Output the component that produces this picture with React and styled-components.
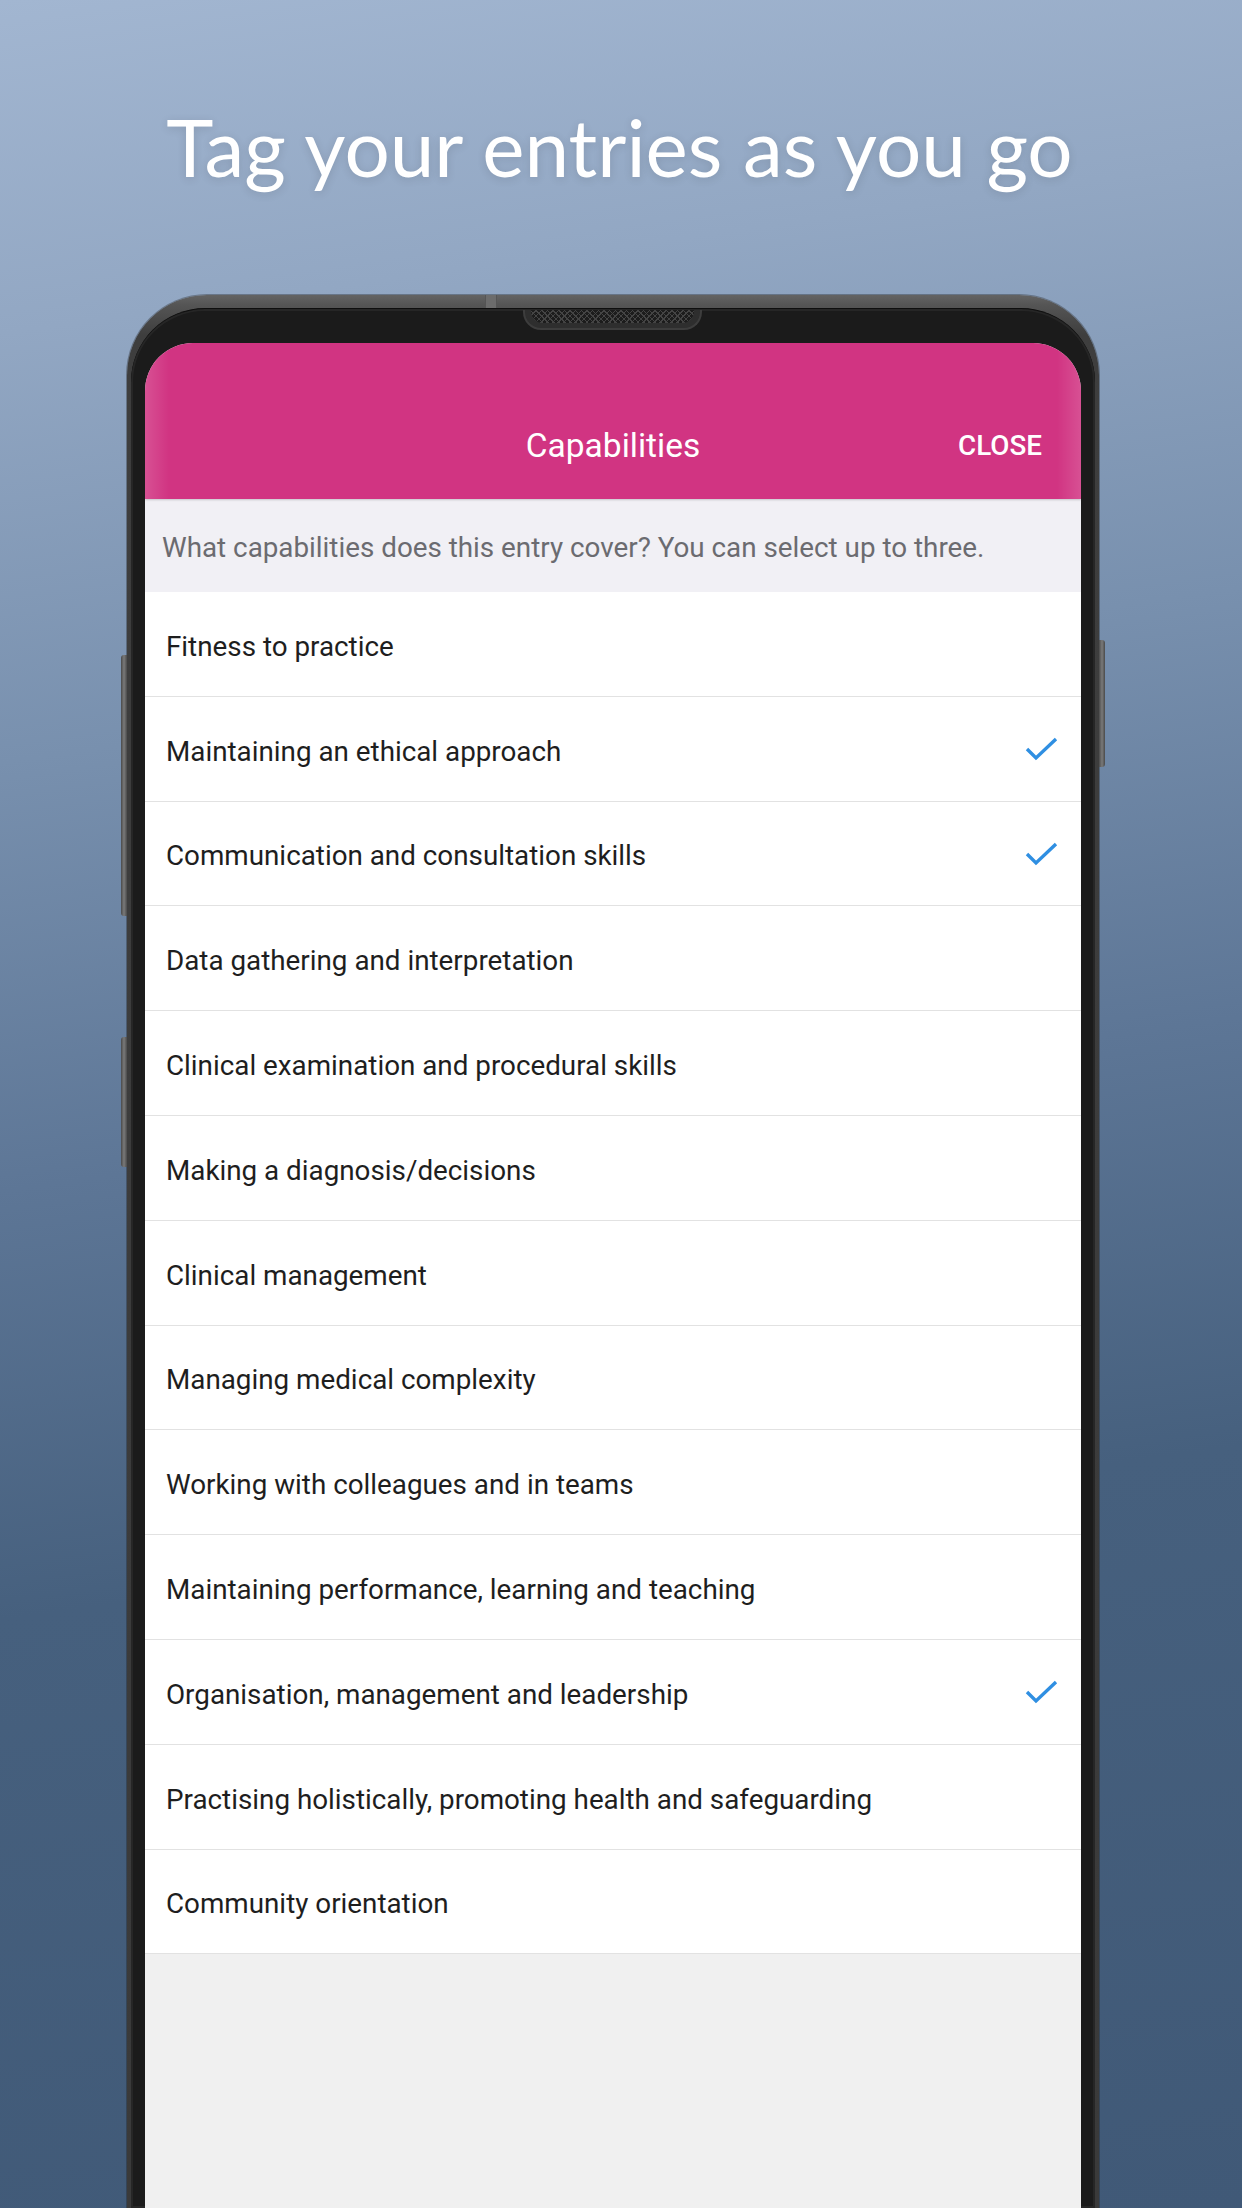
import React from "react";
import styled, { createGlobalStyle } from "styled-components";

const GlobalStyle = createGlobalStyle`
  html, body { margin: 0; padding: 0; }
  body { width: 1242px; height: 2208px; overflow: hidden; }
  * { box-sizing: border-box; }
`;

const Page = styled.div`
  width: 1242px;
  height: 2208px;
  display: flex;
  flex-direction: column;
  overflow: hidden;
  background: linear-gradient(172deg, #a2b6d1 0%, #92a7c3 14%, #7890ae 32%, #5d7696 50%, #46607e 68%, #405977 100%);
`;

const Title = styled.h1`
  margin: 98px 0 0 0;
  height: 96px;
  line-height: 96px;
  text-align: center;
  font-family: Lato, "Open Sans", sans-serif;
  font-weight: 400;
  font-size: 80px;
  color: #ffffff;
  text-shadow: 0 2px 10px rgba(0, 0, 0, 0.12);
  padding-right: 3px;
`;

const Phone = styled.div`
  position: relative;
  flex: 1;
  margin: 101px 0 0 127px;
  width: 972px;
  display: flex;
  flex-direction: column;
  padding: 13px 4px 0 4px;
  border-radius: 80px 80px 0 0;
  background: linear-gradient(180deg, #636363 0px, #555 10px, #3e3e3e 40px, #3a3a3a 100%);
  box-shadow: 0 0 0 1px rgba(30, 30, 30, 0.35);
`;

const Seam = styled.div`
  position: absolute;
  left: 358px;
  top: 0;
  width: 12px;
  height: 13px;
  background: #6c6c6c;
  border-left: 1px solid #555;
  border-right: 1px solid #555;
`;

const SideButton = styled.div`
  position: absolute;
  width: 6px;
  top: ${(p) => p.$top}px;
  height: ${(p) => p.$h}px;
  ${(p) => (p.$side === "left" ? "left: -6px;" : "right: -6px;")}
  border-radius: ${(p) => (p.$side === "left" ? "3px 0 0 3px" : "0 3px 3px 0")};
  background: linear-gradient(90deg, #4a4a4a, #7a7a7a 50%, #4a4a4a);
`;

const Bezel = styled.div`
  position: relative;
  flex: 1;
  display: flex;
  flex-direction: column;
  padding: 34px 14px 0 14px;
  border-radius: 74px 74px 0 0;
  background: #1b1b1b;
  border-top: 1px solid #0e0e0e;
  box-shadow: inset 0 0 0 2px #262626;
`;

const Notch = styled.div`
  position: absolute;
  left: 392px;
  top: 1px;
  width: 179px;
  height: 20px;
  border-radius: 0 0 18px 18px;
  background: #2e2e2e;
  border: 2px solid #3d3d3d;
  border-top: none;
  padding: 0 6px 5px 6px;
  display: flex;
`;

const Grille = styled.div`
  flex: 1;
  border-radius: 0 0 12px 12px;
  background-color: #1c1c1c;
  background-image: repeating-linear-gradient(45deg, #444 0 1px, transparent 1px 4px),
    repeating-linear-gradient(-45deg, #444 0 1px, transparent 1px 4px);
`;

const Screen = styled.div`
  position: relative;
  flex: 1;
  display: flex;
  flex-direction: column;
  border-radius: 48px 48px 0 0;
  overflow: hidden;
  background: #f0f0f0;
  font-family: Roboto, "Liberation Sans", sans-serif;
`;

const Header = styled.header`
  position: relative;
  height: 156px;
  padding-top: 46px;
  background: #d13482;
  box-shadow: 0 1px 2px rgba(0, 0, 0, 0.18);
  z-index: 1;
  &::after {
    content: "";
    position: absolute;
    inset: 0;
    background: linear-gradient(90deg, rgba(255, 255, 255, 0.14) 0, rgba(255, 255, 255, 0) 24px, rgba(255, 255, 255, 0) calc(100% - 24px), rgba(255, 255, 255, 0.14) 100%);
    pointer-events: none;
  }
`;

const Toolbar = styled.div`
  height: 110px;
  display: grid;
  grid-template-columns: 1fr auto 1fr;
  align-items: center;
  color: #ffffff;
`;

const HeaderTitle = styled.div`
  grid-column: 2;
  font-size: 33.5px;
  font-weight: 400;
  padding-top: 2px;
`;

const CloseButton = styled.div`
  grid-column: 3;
  justify-self: end;
  padding-right: 39px;
  padding-top: 2px;
  font-size: 27.8px;
  font-weight: 500;
`;

const Intro = styled.div`
  height: 93px;
  display: flex;
  align-items: center;
  padding: 4px 0 0 17px;
  background: #f1f0f5;
  color: #6b6b70;
  font-size: 27.8px;
`;

const List = styled.div`
  background: #ffffff;
`;

const Row = styled.div`
  height: 104.8px;
  display: flex;
  align-items: center;
  justify-content: space-between;
  padding: 5px 23px 0 21px;
  border-bottom: 1.5px solid #e2e2e2;
  color: #1e1e1e;
  font-size: 27.8px;
`;

const Check = styled.svg`
  width: 34px;
  height: 26px;
  margin-top: -4px;
  flex-shrink: 0;
`;

const EmptyArea = styled.div`
  flex: 1;
  background: #f0f0f0;
`;

const items = [
  ["Fitness to practice", false],
  ["Maintaining an ethical approach", true],
  ["Communication and consultation skills", true],
  ["Data gathering and interpretation", false],
  ["Clinical examination and procedural skills", false],
  ["Making a diagnosis/decisions", false],
  ["Clinical management", false],
  ["Managing medical complexity", false],
  ["Working with colleagues and in teams", false],
  ["Maintaining performance, learning and teaching", false],
  ["Organisation, management and leadership", true],
  ["Practising holistically, promoting health and safeguarding", false],
  ["Community orientation", false],
];

function CheckIcon() {
  return (
    <Check viewBox="0 0 34 26">
      <polyline
        points="3,13 12,22 32,3"
        fill="none"
        stroke="#2f8fe2"
        strokeWidth="3.4"
        strokeLinejoin="miter"
      />
    </Check>
  );
}

export default function App() {
  return (
    <>
      <GlobalStyle />
      <Page>
        <Title>Tag your entries as you go</Title>
        <Phone>
          <Seam />
          <SideButton $side="left" $top={360} $h={261} />
          <SideButton $side="left" $top={742} $h={130} />
          <SideButton $side="right" $top={345} $h={127} />
          <Bezel>
            <Notch>
              <Grille />
            </Notch>
            <Screen>
              <Header>
                <Toolbar>
                  <HeaderTitle>Capabilities</HeaderTitle>
                  <CloseButton>CLOSE</CloseButton>
                </Toolbar>
              </Header>
              <Intro>What capabilities does this entry cover? You can select up to three.</Intro>
              <List>
                {items.map(([label, checked]) => (
                  <Row key={label}>
                    <span>{label}</span>
                    {checked && <CheckIcon />}
                  </Row>
                ))}
              </List>
              <EmptyArea />
            </Screen>
          </Bezel>
        </Phone>
      </Page>
    </>
  );
}
